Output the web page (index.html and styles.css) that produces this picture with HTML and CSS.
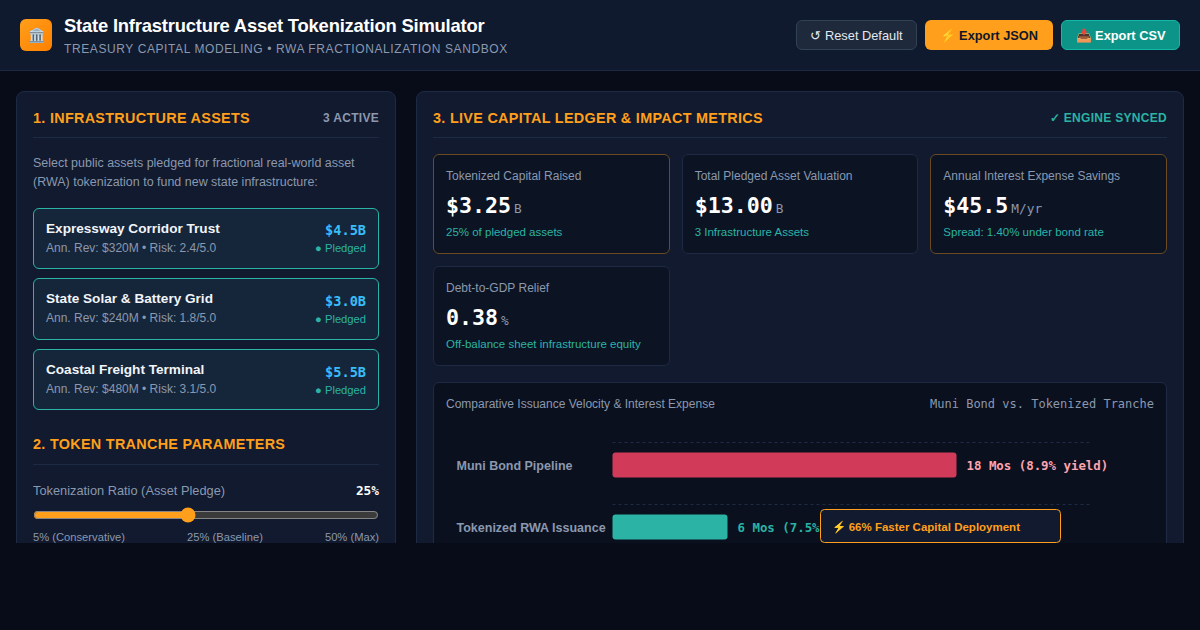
FILE: index.html
```html
<!DOCTYPE html>
<html lang="en">
<head>
    <meta charset="UTF-8">
    <meta name="viewport" content="width=device-width, initial-scale=1.0">
    <title>State Infrastructure Asset Tokenization Simulator</title>
    <link rel="stylesheet" href="styles.css">
</head>
<body>
    <header class="topbar">
        <div class="brand">
            <div class="logo">🏛️</div>
            <div>
                <h1>State Infrastructure Asset Tokenization Simulator</h1>
                <p class="subtitle">TREASURY CAPITAL MODELING • RWA FRACTIONALIZATION SANDBOX</p>
            </div>
        </div>
        <div class="actions">
            <button class="btn btn-reset">↺ Reset Default</button>
            <button class="btn btn-json">⚡ Export JSON</button>
            <button class="btn btn-csv">📥 Export CSV</button>
        </div>
    </header>

    <main class="layout">
        <section class="panel">
            <div class="panel-head">
                <h2>1. INFRASTRUCTURE ASSETS</h2>
                <span class="tag">3 ACTIVE</span>
            </div>
            <p class="intro">Select public assets pledged for fractional real-world asset (RWA) tokenization to fund new state infrastructure:</p>

            <div class="asset-list">
                <div class="asset">
                    <div class="asset-main">
                        <div class="asset-name">Expressway Corridor Trust</div>
                        <div class="asset-meta">Ann. Rev: $320M • Risk: 2.4/5.0</div>
                    </div>
                    <div class="asset-side">
                        <div class="asset-value">$4.5B</div>
                        <div class="asset-status">● Pledged</div>
                    </div>
                </div>
                <div class="asset">
                    <div class="asset-main">
                        <div class="asset-name">State Solar &amp; Battery Grid</div>
                        <div class="asset-meta">Ann. Rev: $240M • Risk: 1.8/5.0</div>
                    </div>
                    <div class="asset-side">
                        <div class="asset-value">$3.0B</div>
                        <div class="asset-status">● Pledged</div>
                    </div>
                </div>
                <div class="asset">
                    <div class="asset-main">
                        <div class="asset-name">Coastal Freight Terminal</div>
                        <div class="asset-meta">Ann. Rev: $480M • Risk: 3.1/5.0</div>
                    </div>
                    <div class="asset-side">
                        <div class="asset-value">$5.5B</div>
                        <div class="asset-status">● Pledged</div>
                    </div>
                </div>
            </div>

            <div class="panel-head panel-head-second">
                <h2>2. TOKEN TRANCHE PARAMETERS</h2>
            </div>
            <div class="param-row">
                <label for="ratio">Tokenization Ratio (Asset Pledge)</label>
                <span class="param-value">25%</span>
            </div>
            <input type="range" id="ratio" class="slider" min="5" max="50" value="25">
            <div class="scale">
                <span>5% (Conservative)</span>
                <span>25% (Baseline)</span>
                <span>50% (Max)</span>
            </div>
        </section>

        <section class="panel">
            <div class="panel-head">
                <h2>3. LIVE CAPITAL LEDGER &amp; IMPACT METRICS</h2>
                <span class="tag tag-ok">✓ ENGINE SYNCED</span>
            </div>

            <div class="metrics">
                <div class="metric metric-hot">
                    <div class="metric-label">Tokenized Capital Raised</div>
                    <div class="metric-value">$3.25<small>B</small></div>
                    <div class="metric-note">25% of pledged assets</div>
                </div>
                <div class="metric">
                    <div class="metric-label">Total Pledged Asset Valuation</div>
                    <div class="metric-value">$13.00<small>B</small></div>
                    <div class="metric-note">3 Infrastructure Assets</div>
                </div>
                <div class="metric metric-hot">
                    <div class="metric-label">Annual Interest Expense Savings</div>
                    <div class="metric-value">$45.5<small>M/yr</small></div>
                    <div class="metric-note">Spread: 1.40% under bond rate</div>
                </div>
                <div class="metric">
                    <div class="metric-label">Debt-to-GDP Relief</div>
                    <div class="metric-value">0.38<small>%</small></div>
                    <div class="metric-note">Off-balance sheet infrastructure equity</div>
                </div>
            </div>

            <div class="chart-box">
                <div class="chart-head">
                    <span>Comparative Issuance Velocity &amp; Interest Expense</span>
                    <span class="chart-sub">Muni Bond vs. Tokenized Tranche</span>
                </div>
                <svg class="chart" width="708" height="130" viewBox="0 0 708 130">
                    <line class="grid-line" x1="166.500" y1="16.500" x2="645" y2="16.500"/>
                    <line class="grid-line" x1="166.500" y1="78.500" x2="645" y2="78.500"/>
                    <text class="bar-label" x="10.500" y="44">Muni Bond Pipeline</text>
                    <rect x="166.500" y="26.500" width="344" height="25" rx="3" fill="#d13a58"/>
                    <text class="bar-value bar-value-red" x="520.500" y="44">18 Mos (8.9% yield)</text>
                    <text class="bar-label" x="10.500" y="106">Tokenized RWA Issuance</text>
                    <rect x="166.500" y="88.500" width="115" height="25" rx="3" fill="#2bb3a5"/>
                    <text class="bar-value bar-value-teal" x="291.500" y="106">6 Mos (7.5%</text>
                    <rect class="callout" x="374.500" y="83.500" width="240" height="33" rx="4"/>
                    <text class="callout-text" x="385.500" y="105">⚡ 66% Faster Capital Deployment</text>
                </svg>
            </div>
        </section>
    </main>
</body>
</html>
```

FILE: styles.css
```css
* {
    margin: 0;
    padding: 0;
    box-sizing: border-box;
}

body {
    font-family: 'Liberation Sans', Arial, sans-serif;
    background: #080c18;
    color: #e2e8f0;
    height: 630px;
    overflow: hidden;
}

.topbar {
    display: flex;
    align-items: center;
    justify-content: space-between;
    height: 71px;
    padding: 0 20px;
    background: #0f1a2e;
    border-bottom: 1px solid #1e2a44;
}

.brand {
    display: flex;
    align-items: center;
    gap: 12px;
}

.logo {
    width: 32px;
    height: 32px;
    border-radius: 6px;
    background: linear-gradient(135deg, #ff9f1c, #ff8000);
    display: flex;
    align-items: center;
    justify-content: center;
    font-size: 14px;
}

h1 {
    font-size: 18.400px;
    font-weight: 700;
    color: #fff;
    letter-spacing: -0.2px;
    line-height: 24px;
}

.subtitle {
    font-size: 12px;
    color: #8b98ae;
    letter-spacing: 0.6px;
    margin-top: 4px;
    line-height: 14px;
}

.actions {
    display: flex;
    gap: 8px;
}

.btn {
    font-family: inherit;
    font-size: 12.800px;
    height: 30px;
    padding: 0 14px;
    border-radius: 6px;
    border: 1px solid transparent;
}

.btn-reset {
    padding: 0 13px;
    background: #1e293b;
    border-color: #334155;
    color: #e2e8f0;
}

.btn-json {
    background: #ff9f1c;
    color: #0f172a;
    font-weight: 700;
}

.btn-csv {
    padding: 0 13.500px;
    background: #0d9488;
    border-color: #14b8a6;
    color: #fff;
    font-weight: 700;
}

.layout {
    display: grid;
    grid-template-columns: 380px 768px;
    gap: 20px;
    height: 472px;
    padding: 20px 16px 0;
    overflow: hidden;
}

.panel {
    background: #111a2e;
    border: 1px solid #1e2a44;
    border-radius: 8px;
    padding: 16px;
    height: 520px;
}

.panel-head {
    display: flex;
    align-items: center;
    justify-content: space-between;
    height: 30px;
    padding-bottom: 9px;
    border-bottom: 1px solid #1e2a44;
}

.panel-head-second {
    margin-top: 21px;
    height: 34px;
    padding-bottom: 8px;
}

h2 {
    font-size: 14.400px;
    font-weight: 700;
    color: #ff9f1c;
    letter-spacing: 0.3px;
}

.tag {
    font-size: 12px;
    font-weight: 700;
    color: #8b98ae;
    letter-spacing: 0.3px;
}

.tag-ok {
    color: #2bb3a5;
}

.intro {
    font-size: 12.480px;
    line-height: 19px;
    color: #8b98ae;
    margin-top: 16px;
}

.asset-list {
    display: flex;
    flex-direction: column;
    gap: 9.600px;
    margin-top: 15.600px;
}

.asset {
    display: flex;
    justify-content: space-between;
    align-items: center;
    height: 61.200px;
    padding: 0 12px;
    background: #16263a;
    border: 1px solid #2bb3a5;
    border-radius: 6px;
}

.asset-main {
    padding-bottom: 1px;
}

.asset-name {
    font-size: 13.600px;
    font-weight: 700;
    color: #f1f5f9;
    margin-bottom: 5px;
}

.asset-meta {
    font-size: 12px;
    color: #8b98ae;
}

.asset-side {
    text-align: right;
}

.asset-value {
    font-family: 'DejaVu Sans Mono', monospace;
    font-size: 13.600px;
    font-weight: 700;
    color: #38bdf8;
    margin-bottom: 4px;
}

.asset-status {
    font-size: 11.200px;
    color: #2bb3a5;
}

.param-row {
    display: flex;
    justify-content: space-between;
    align-items: center;
    margin-top: 18px;
    font-size: 12.800px;
    color: #8b98ae;
}

.param-value {
    font-family: 'DejaVu Sans Mono', monospace;
    font-size: 12.800px;
    font-weight: 700;
    color: #fff;
}

.slider {
    display: block;
    width: 100%;
    margin-top: 9px;
    accent-color: #ff9f1c;
    color-scheme: dark;
    height: 16px;
}

.scale {
    display: flex;
    justify-content: space-between;
    margin-top: 8px;
    font-size: 11.200px;
    color: #8b98ae;
}

.metrics {
    display: grid;
    grid-template-columns: repeat(3, 1fr);
    gap: 12px;
    margin-top: 16px;
}

.metric {
    height: 100px;
    padding: 14px 12px 0;
    background: #0c1424;
    border: 1px solid #1e2a44;
    border-radius: 6px;
}

.metric-hot {
    border-color: #6b4a22;
}

.metric-label {
    font-size: 12px;
    color: #8b98ae;
}

.metric-value {
    font-family: 'DejaVu Sans Mono', monospace;
    font-size: 21.600px;
    font-weight: 700;
    color: #fff;
    margin-top: 10px;
}

.metric-value small {
    font-size: 12.800px;
    font-weight: 400;
    color: #8b98ae;
    margin-left: 3px;
}

.metric-note {
    font-size: 11.500px;
    color: #2bb3a5;
    margin-top: 8px;
}

.chart-box {
    margin-top: 16px;
    padding: 14px 12px;
    background: #0a101e;
    border: 1px solid #1e2a44;
    border-radius: 6px;
    height: 200px;
}

.chart-head {
    display: flex;
    justify-content: space-between;
    font-size: 12px;
    color: #8b98ae;
}

.chart-sub {
    font-family: 'DejaVu Sans Mono', monospace;
}

.chart {
    display: block;
    margin-top: 15px;
}

.grid-line {
    stroke: #1e2a44;
    stroke-dasharray: 3 3;
}

.bar-label {
    font-family: 'Liberation Sans', Arial, sans-serif;
    font-size: 12.500px;
    font-weight: 700;
    fill: #8b98ae;
}

.bar-value {
    font-family: 'DejaVu Sans Mono', monospace;
    font-size: 12.400px;
    font-weight: 700;
}

.bar-value-red {
    fill: #fda4af;
}

.bar-value-teal {
    fill: #2bb3a5;
}

.callout {
    fill: #111a2e;
    stroke: #ff9f1c;
}

.callout-text {
    font-family: 'Liberation Sans', Arial, sans-serif;
    font-size: 11.500px;
    font-weight: 700;
    fill: #ff9f1c;
}
```
